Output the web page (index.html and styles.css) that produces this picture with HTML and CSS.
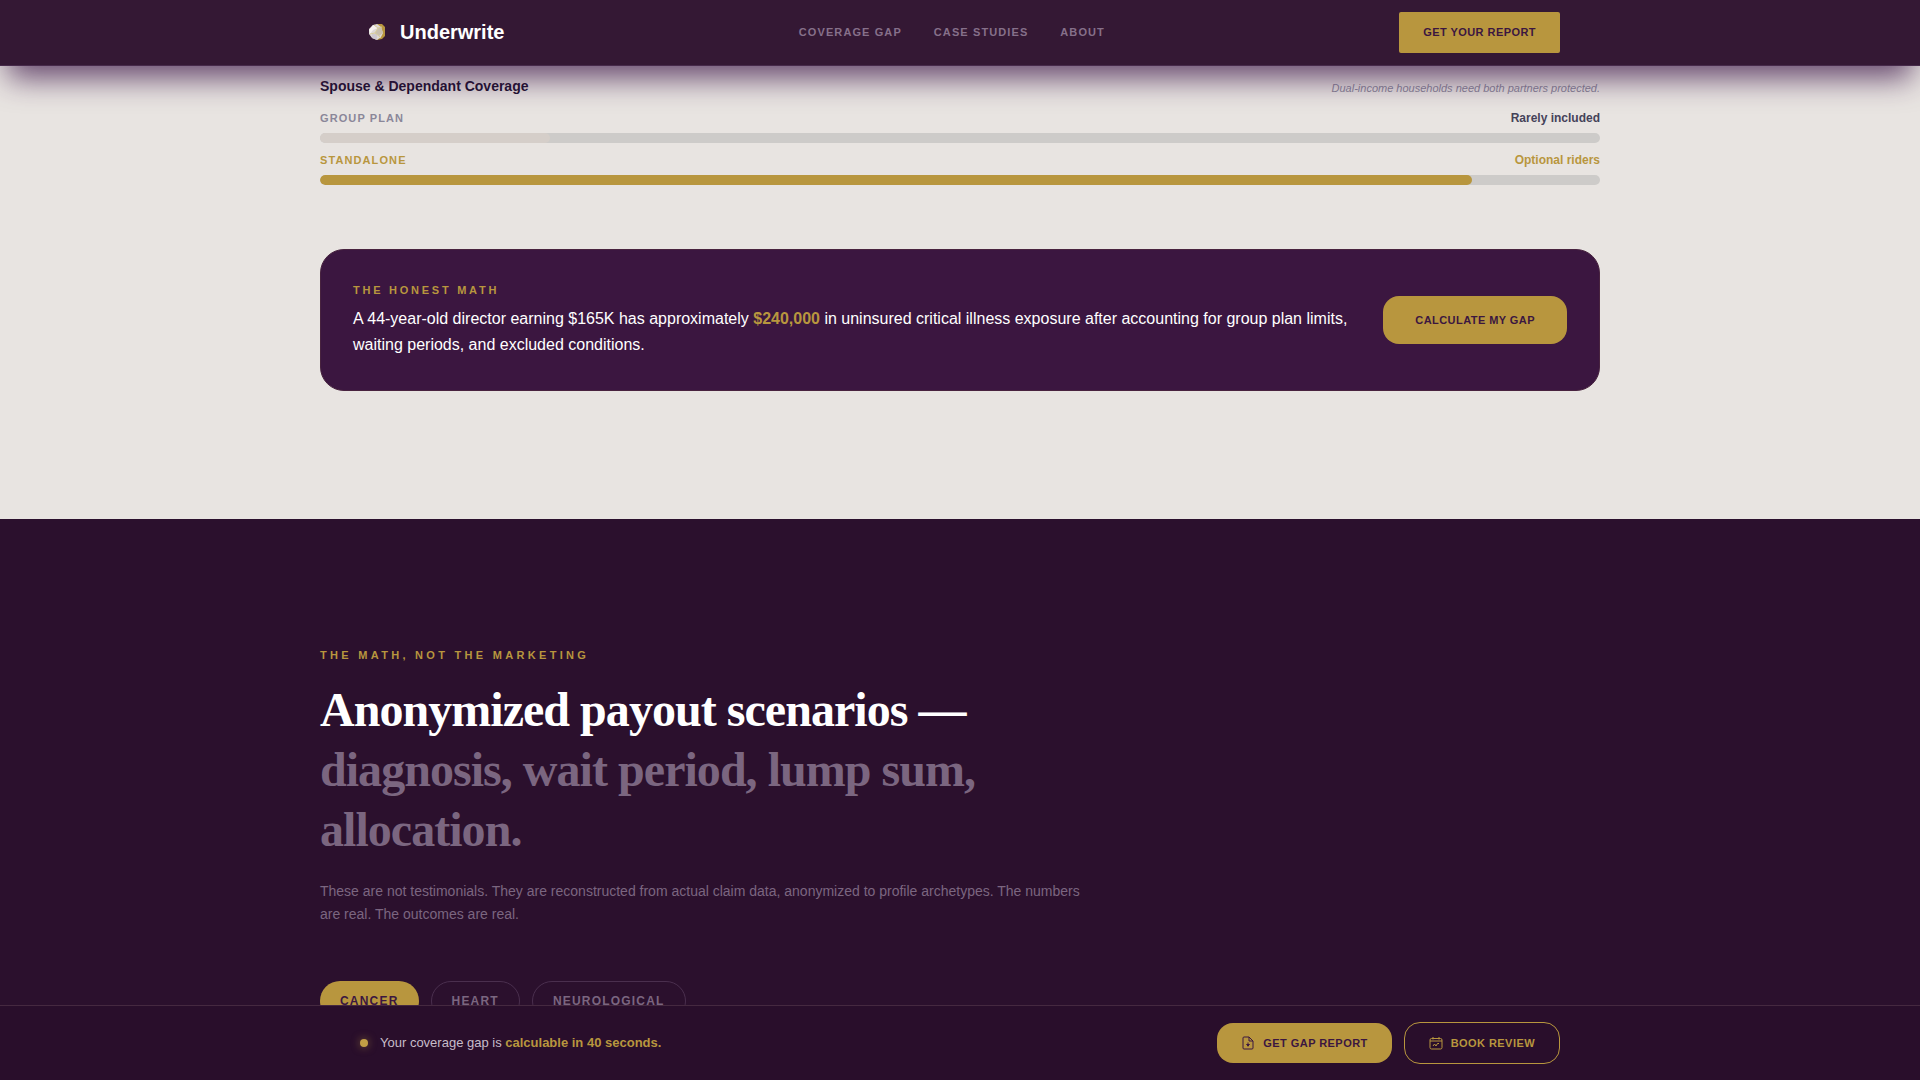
FILE: index.html
```html
<!DOCTYPE html>
<html lang="en">
<head>
    <meta charset="utf-8">
    <title>Underwrite</title>
    <link rel="stylesheet" href="styles.css">
</head>
<body>
    <header class="nav">
        <div class="bar-inner">
            <a class="logo" href="#">
                <svg class="logo-mark" viewBox="0 0 32 32" aria-hidden="true">
                    <path d="M17 8 L22 8 L25 11 L25 20 L22 23 L17 24 Z" fill="#b8963e"/>
                    <path d="M13 9 L17 8 L21 11 L23 17 L21 21 L17 24 L12 22 L9 18 L9 13 Z" fill="#ded8d6"/>
                    <path d="M13 9 L18 12 L13 14 L10 18 L9 14 Z" fill="#f6f1ef"/>
                    <path d="M18 12 L21 11 L23 17 L19 20 L15 17 Z" fill="#c9bfae"/>
                    <path d="M12 18 L17 18 L17 24 L12 22 Z" fill="#cfc8cf"/>
                    <path d="M14 9 L18 12 L22 11 M18 12 L15 17 L19 20 L21 22 M15 17 L10 18" fill="none" stroke="#d8cc9a"/>
                </svg>
                <span>Underwrite</span>
            </a>
            <nav class="nav-links">
                <a href="#gap">Coverage Gap</a>
                <a href="#cases">Case Studies</a>
                <a href="#about">About</a>
            </nav>
            <button class="btn btn-nav" type="button">Get Your Report</button>
        </div>
    </header>

    <main class="page">
        <section class="gap-section" id="gap">
            <div class="container">
                <div class="compare-head">
                    <h3>Spouse &amp; Dependant Coverage</h3>
                    <em>Dual-income households need both partners protected.</em>
                </div>
                <div class="compare-row">
                    <div class="compare-label">
                        <span>Group Plan</span>
                        <strong>Rarely included</strong>
                    </div>
                    <div class="track"><div class="fill" style="width: 18%"></div></div>
                </div>
                <div class="compare-row standalone">
                    <div class="compare-label">
                        <span>Standalone</span>
                        <strong>Optional riders</strong>
                    </div>
                    <div class="track"><div class="fill" style="width: 90%"></div></div>
                </div>

                <div class="math-card">
                    <div class="math-text">
                        <p class="eyebrow">The Honest Math</p>
                        <p class="math-copy">A 44-year-old director earning $165K has approximately <strong>$240,000</strong> in uninsured critical illness exposure after accounting for group plan limits, waiting periods, and excluded conditions.</p>
                    </div>
                    <button class="btn btn-calc" type="button">Calculate My Gap</button>
                </div>
            </div>
        </section>

        <section class="cases-section" id="cases">
            <div class="container">
                <div class="intro">
                    <p class="eyebrow">The Math, Not the Marketing</p>
                    <h2>Anonymized payout scenarios —<br><span>diagnosis, wait period, lump sum, allocation.</span></h2>
                    <p class="lead">These are not testimonials. They are reconstructed from actual claim data, anonymized to profile archetypes. The numbers are real. The outcomes are real.</p>
                </div>
                <div class="tabs">
                    <button class="tab active" type="button">Cancer</button>
                    <button class="tab" type="button">Heart</button>
                    <button class="tab" type="button">Neurological</button>
                </div>
            </div>
        </section>
    </main>

    <footer class="sticky-bar">
        <div class="bar-inner">
            <p class="status"><span class="dot"></span><span>Your coverage gap is <strong>calculable in 40 seconds.</strong></span></p>
            <div class="actions">
                <button class="btn btn-report" type="button">
                    <svg class="icon" viewBox="0 0 14 14" aria-hidden="true">
                        <path d="M2 2 Q2 1 3 1 H8 L12 5 V12 Q12 13 11 13 H3 Q2 13 2 12 Z M8 1 V5 H12"/>
                        <path d="M7 6.5 V10.5 M5.5 8.5 L7 10 L8.5 8.5 Z"/>
                    </svg>
                    Get Gap Report
                </button>
                <button class="btn btn-book" type="button">
                    <svg class="icon" viewBox="0 0 14 14" aria-hidden="true">
                        <path d="M2.5 2.5 H11.5 Q13 2.5 13 4 V11.5 Q13 13 11.5 13 H2.5 Q1 13 1 11.5 V4 Q1 2.5 2.5 2.5 Z M1 5 H13 M4 1 V3.5 M10 1 V3.5"/>
                        <path d="M4 10 L5.5 8 L7 10 L8.5 7.5 H10"/>
                    </svg>
                    Book Review
                </button>
            </div>
        </div>
    </footer>
</body>
</html>
```

FILE: styles.css
```css
* {
    box-sizing: border-box;
    margin: 0;
    padding: 0;
}
body {
    display: flex;
    flex-direction: column;
    height: 100vh;
    font-family: "Liberation Sans", Arial, sans-serif;
    line-height: 1.5;
    background: #2b102d;
    color: #fff;
}
a {
    color: inherit;
    text-decoration: none;
}
.container {
    max-width: 1280px;
    margin: 0 auto;
}
.bar-inner {
    display: flex;
    align-items: center;
    justify-content: space-between;
    max-width: 1280px;
    margin: 0 auto;
    padding: 0 40px;
}

/* header */
.nav {
    position: relative;
    z-index: 2;
    padding: 12px 0;
    background: #341834;
    border-bottom: 1px solid #472a4b;
    box-shadow: 0 20px 30px -8px rgba(60, 22, 72, 0.75);
}
.logo {
    display: flex;
    align-items: center;
    gap: 8px;
    padding-bottom: 1px;
    font-size: 20px;
    font-weight: bold;
}
.logo-mark {
    width: 32px;
    height: 32px;
}
.nav-links {
    display: flex;
    gap: 32px;
    font-size: 11px;
    font-weight: bold;
    letter-spacing: 0.1em;
    text-transform: uppercase;
    color: #86708a;
}

/* buttons */
.btn {
    display: flex;
    align-items: center;
    gap: 8px;
    font-family: inherit;
    font-size: 11px;
    font-weight: bold;
    line-height: 16px;
    letter-spacing: 0.04em;
    text-transform: uppercase;
    white-space: nowrap;
    color: #3b1640;
    background: #b8963e;
    border: none;
    border-radius: 16px;
    cursor: pointer;
}
.btn-nav {
    padding: 12px 24px 13px;
    border-radius: 2px;
}
.btn-calc {
    padding: 16px 32px;
}
.btn-report {
    padding: 12px 24px;
}
.btn-book {
    padding: 12px 24px;
    color: #b8963e;
    background: transparent;
    border: 1px solid #b8963e;
}
.icon {
    width: 14px;
    height: 14px;
    fill: none;
    stroke: currentColor;
}

/* scrolling content */
.page {
    flex: 1;
    min-height: 0;
    overflow-y: auto;
    scrollbar-width: none;
}
.gap-section {
    padding: 10px 0 128px;
    background: #e8e4e1;
    color: #1e1230;
}
.compare-head {
    display: flex;
    align-items: flex-end;
    justify-content: space-between;
    margin-bottom: 12px;
}
.compare-head h3 {
    font-size: 14px;
}
.compare-head em {
    font-size: 11px;
    line-height: 18px;
    color: #8a8799;
}
.compare-row {
    margin-bottom: 8px;
}
.compare-label {
    display: flex;
    align-items: center;
    justify-content: space-between;
    margin-bottom: 6px;
    font-size: 12px;
    color: #454259;
}
.compare-label span {
    font-size: 11px;
    font-weight: bold;
    letter-spacing: 0.1em;
    text-transform: uppercase;
    color: #8a8799;
}
.track {
    height: 10px;
    border-radius: 5px;
    background: #cdcbc9;
    overflow: hidden;
}
.fill {
    height: 100%;
    border-radius: 5px;
    background: #d5cec9;
}
.standalone .compare-label,
.standalone .compare-label span {
    color: #b8963e;
}
.standalone .fill {
    background: #b8963e;
}

.math-card {
    display: flex;
    align-items: center;
    justify-content: space-between;
    gap: 32px;
    margin-top: 64px;
    padding: 32px;
    border: 1px solid #48233f;
    border-radius: 24px;
    background: #3b1640;
    color: #fff;
}
.eyebrow {
    font-size: 11px;
    font-weight: bold;
    line-height: 16px;
    letter-spacing: 0.3em;
    text-transform: uppercase;
    color: #b8963e;
}
.math-card .eyebrow {
    margin-bottom: 8px;
    letter-spacing: 0.25em;
}
.math-copy {
    font-size: 16px;
    line-height: 26px;
}
.math-copy strong {
    color: #b8963e;
}

.cases-section {
    padding: 128px 0;
    background: #2b102d;
}
.intro {
    max-width: 768px;
    margin-bottom: 55px;
}
.intro h2 {
    margin: 17px 0 20px;
    font-family: "Liberation Serif", "Times New Roman", serif;
    font-size: 48px;
    line-height: 60px;
    letter-spacing: -0.02em;
}
.intro h2 span {
    color: #7b6680;
}
.lead {
    font-size: 14px;
    line-height: 23px;
    color: #7b6680;
}
.tabs {
    display: flex;
    gap: 12px;
}
.tab {
    padding: 10px 20px;
    font-family: inherit;
    font-size: 12px;
    font-weight: bold;
    line-height: 18px;
    letter-spacing: 0.1em;
    text-transform: uppercase;
    color: #7b6680;
    background: transparent;
    border: 1px solid #4a2f4e;
    border-radius: 20px;
    cursor: pointer;
}
.tab.active {
    color: #3b1640;
    background: #b8963e;
    border: none;
}

/* bottom call to action */
.sticky-bar {
    padding: 16px 0;
    background: #290e2b;
    border-top: 1px solid #452940;
}
.status {
    display: flex;
    align-items: center;
    gap: 12px;
    font-size: 13px;
    color: #c7bcc9;
}
.status strong {
    color: #b8963e;
}
.dot {
    width: 8px;
    height: 8px;
    border-radius: 50%;
    background: #c29f45;
    box-shadow: 0 0 8px rgba(184, 150, 62, 0.6);
}
.actions {
    display: flex;
    align-items: center;
    gap: 12px;
}
```
